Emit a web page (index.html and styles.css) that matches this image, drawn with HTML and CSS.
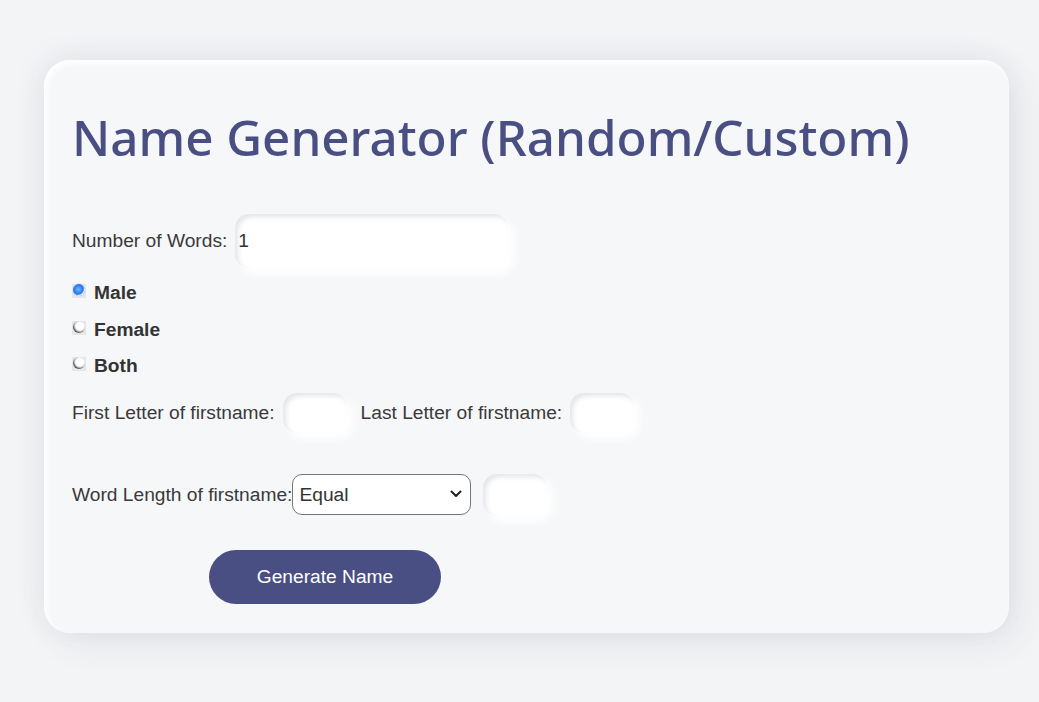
FILE: index.html
```html
<!DOCTYPE html>
<html lang="en">
<head>
<meta charset="utf-8">
<title>Name Generator</title>
<link rel="stylesheet" href="styles.css">
</head>
<body>
<main class="card">
  <h1 class="title">Name Generator (Random/Custom)</h1>
  <div class="row row-words">
    <label class="lbl" for="words">Number of Words:</label>
    <input class="field field-wide" id="words" type="text" value="1">
  </div>
  <div class="radios">
    <label class="radio-line"><input class="radio" type="radio" name="g" checked><span>Male</span></label>
    <label class="radio-line"><input class="radio" type="radio" name="g"><span>Female</span></label>
    <label class="radio-line"><input class="radio" type="radio" name="g"><span>Both</span></label>
  </div>
  <div class="row row-letters">
    <label class="lbl" for="first">First Letter of firstname:</label>
    <input class="field field-small" id="first" type="text">
    <label class="lbl lbl-last" for="last">Last Letter of firstname:</label>
    <input class="field field-small" id="last" type="text">
  </div>
  <div class="row row-length">
    <label class="lbl lbl-tight" for="len">Word Length of firstname:</label>
    <select class="select" id="len">
      <option>Equal</option>
      <option>Less than</option>
      <option>Greater than</option>
    </select>
    <input class="field field-small field-len" type="text">
  </div>
  <div class="actions">
    <button class="btn" type="button">Generate Name</button>
  </div>
</main>
</body>
</html>
```
FILE: styles.css
```css
html, body {
  margin: 0;
  padding: 0;
}
body {
  background: #f3f4f6;
  font-family: "Liberation Sans", Arial, sans-serif;
  color: #333;
  height: 702px;
  overflow: hidden;
}
.card {
  box-sizing: border-box;
  width: 965px;
  margin: 60px 0 0 44px;
  padding: 28px 28px 29px 28px;
  background: #f6f7f9;
  border-radius: 26px;
  box-shadow: inset 3px 3px 6px #ffffff,
              10px 10px 36px rgba(60, 64, 80, 0.09),
              -6px -6px 30px rgba(60, 64, 80, 0.05);
}
.title {
  margin: 19px 0 47px 0;
  font-family: "Noto Sans", "Open Sans", sans-serif;
  font-weight: 500;
  font-size: 49.3px;
  line-height: 60px;
  color: #4a4f83;
  white-space: nowrap;
}
.row {
  display: flex;
  align-items: baseline;
}
.lbl {
  font-size: 19.2px;
  color: #3a3a3a;
  margin-right: 8px;
}
.lbl-last {
  margin-left: 14px;
}
.lbl-tight {
  margin-right: 0;
}
.field {
  box-sizing: border-box;
  border: none;
  outline: none;
  background: #ffffff;
  font-family: "Liberation Sans", Arial, sans-serif;
  font-size: 19.2px;
  color: #333;
  padding: 0 3px;
  border-radius: 14px;
  box-shadow: inset 3px 3px 5px #e4e5e8, 6px 6px 9px #ffffff;
}
.field-wide {
  width: 273px;
  height: 54px;
}
.field-small {
  width: 64px;
  height: 40px;
}
.field-len {
  height: 42px;
  margin-left: 12px;
}
.radios {
  margin-top: 6px;
}
.radio-line {
  display: flex;
  align-items: center;
  height: 36.5px;
  font-size: 19.2px;
  font-weight: bold;
  color: #333;
}
.radio-line span {
  position: relative;
  top: 1px;
}
.radio {
  appearance: none;
  -webkit-appearance: none;
  position: relative;
  width: 14px;
  height: 14px;
  margin: 0 8px 0 0;
  border-radius: 1px;
  background: #e6e6e7;
  top: -1px;
}
.radio::before {
  content: "";
  position: absolute;
  left: 1px;
  top: 0px;
  width: 12px;
  height: 12px;
  border-radius: 50%;
  background: #ffffff;
  box-shadow: inset 1px -1px 2px #3c3c3c;
}
.radio:checked::before {
  background: radial-gradient(circle at 45% 45%, #7ab8ff 0, #2a7cf0 45%, #1760d8 70%);
  box-shadow: inset -1px -1px 1px #ffffff, 0 0 0 1px #d6e4f7;
}
.row-letters {
  margin-top: 9px;
}
.row-length {
  margin-top: 41px;
}
.select {
  appearance: none;
  -webkit-appearance: none;
  box-sizing: border-box;
  width: 179px;
  height: 41px;
  border: 1px solid #767676;
  border-radius: 10px;
  background: #ffffff url("data:image/svg+xml,%3Csvg xmlns='http://www.w3.org/2000/svg' width='12' height='8' viewBox='0 0 12 8'%3E%3Cpath d='M1.5 1.5 L6 6 L10.5 1.5' fill='none' stroke='%23222' stroke-width='2' stroke-linecap='round' stroke-linejoin='round'/%3E%3C/svg%3E") no-repeat right 8px center;
  font-family: "Liberation Sans", Arial, sans-serif;
  font-size: 19.2px;
  color: #333;
  padding: 0 28px 0 6px;
}
.actions {
  margin-top: 34px;
  padding-left: 137px;
}
.btn {
  width: 232px;
  height: 54px;
  border: none;
  border-radius: 27px;
  background: #4a4f83;
  color: #ffffff;
  font-family: "Liberation Sans", Arial, sans-serif;
  font-size: 19.2px;
  cursor: pointer;
}
```
